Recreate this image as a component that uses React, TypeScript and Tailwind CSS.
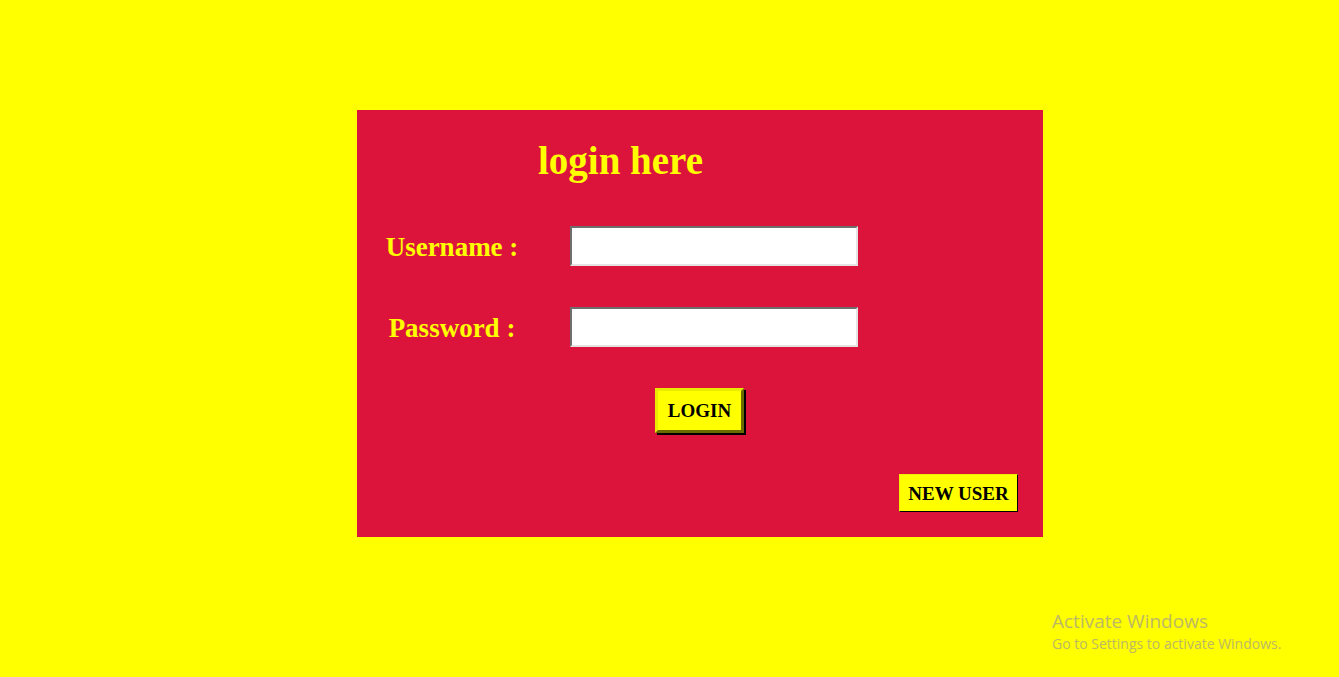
export default function App() {
  const serif = { fontFamily: '"Liberation Serif", "Times New Roman", serif' };
  return (
    <div className="relative h-[677px] w-full overflow-hidden bg-[#ffff00]">
      <div className="pt-[110px] pl-[357px]">
        <div className="flex h-[427px] w-[686px] flex-col bg-[#dc143c] pt-[31px]" style={serif}>
          <h1 className="h-[39px] pl-[181px] text-[39px] font-bold leading-none text-[#ffff00]">login here</h1>

          <div className="mt-[46px] flex h-[40px] items-center">
            <div className="w-[190px] pt-[2px] text-center text-[27px] font-bold leading-none text-[#ffff00]">Username :</div>
            <input
              type="text"
              className="ml-[23px] h-[40px] w-[288px] border-2 border-t-[#6e6e6e] border-l-[#6e6e6e] border-b-[#e3e3e3] border-r-[#e3e3e3] bg-white outline-none"
            />
          </div>

          <div className="mt-[41px] flex h-[40px] items-center">
            <div className="w-[190px] pt-[2px] text-center text-[27px] font-bold leading-none text-[#ffff00]">Password :</div>
            <input
              type="password"
              className="ml-[23px] h-[40px] w-[288px] border-2 border-t-[#6e6e6e] border-l-[#6e6e6e] border-b-[#e3e3e3] border-r-[#e3e3e3] bg-white outline-none"
            />
          </div>

          <div className="mt-[41px] flex justify-center">
            <button
              className="ml-[-1px] flex h-[45px] w-[89px] items-center justify-center border-[3px] border-t-[#eaea00] border-l-[#eaea00] border-b-[#6b6b00] border-r-[#6b6b00] bg-[#ffff00] text-[19px] font-bold leading-none text-black shadow-[2px_2px_0_#000]"
              style={serif}
            >
              LOGIN
            </button>
          </div>

          <div className="mt-[41px] flex justify-end pr-[25px]">
            <button
              className="flex h-[38px] w-[119px] items-center justify-center border border-t-[#f0f000] border-l-[#f0f000] border-b-black border-r-black bg-[#ffff00] text-[19px] font-bold leading-none text-black"
              style={serif}
            >
              NEW USER
            </button>
          </div>
        </div>
      </div>

      <div
        className="absolute left-[1052px] top-[608px] text-[#bdb866]"
        style={{ fontFamily: '"Open Sans", "Noto Sans", sans-serif' }}
      >
        <div className="text-[19px] leading-[26px]">Activate Windows</div>
        <div className="text-[14px] leading-[20px]">Go to Settings to activate Windows.</div>
      </div>
    </div>
  );
}
